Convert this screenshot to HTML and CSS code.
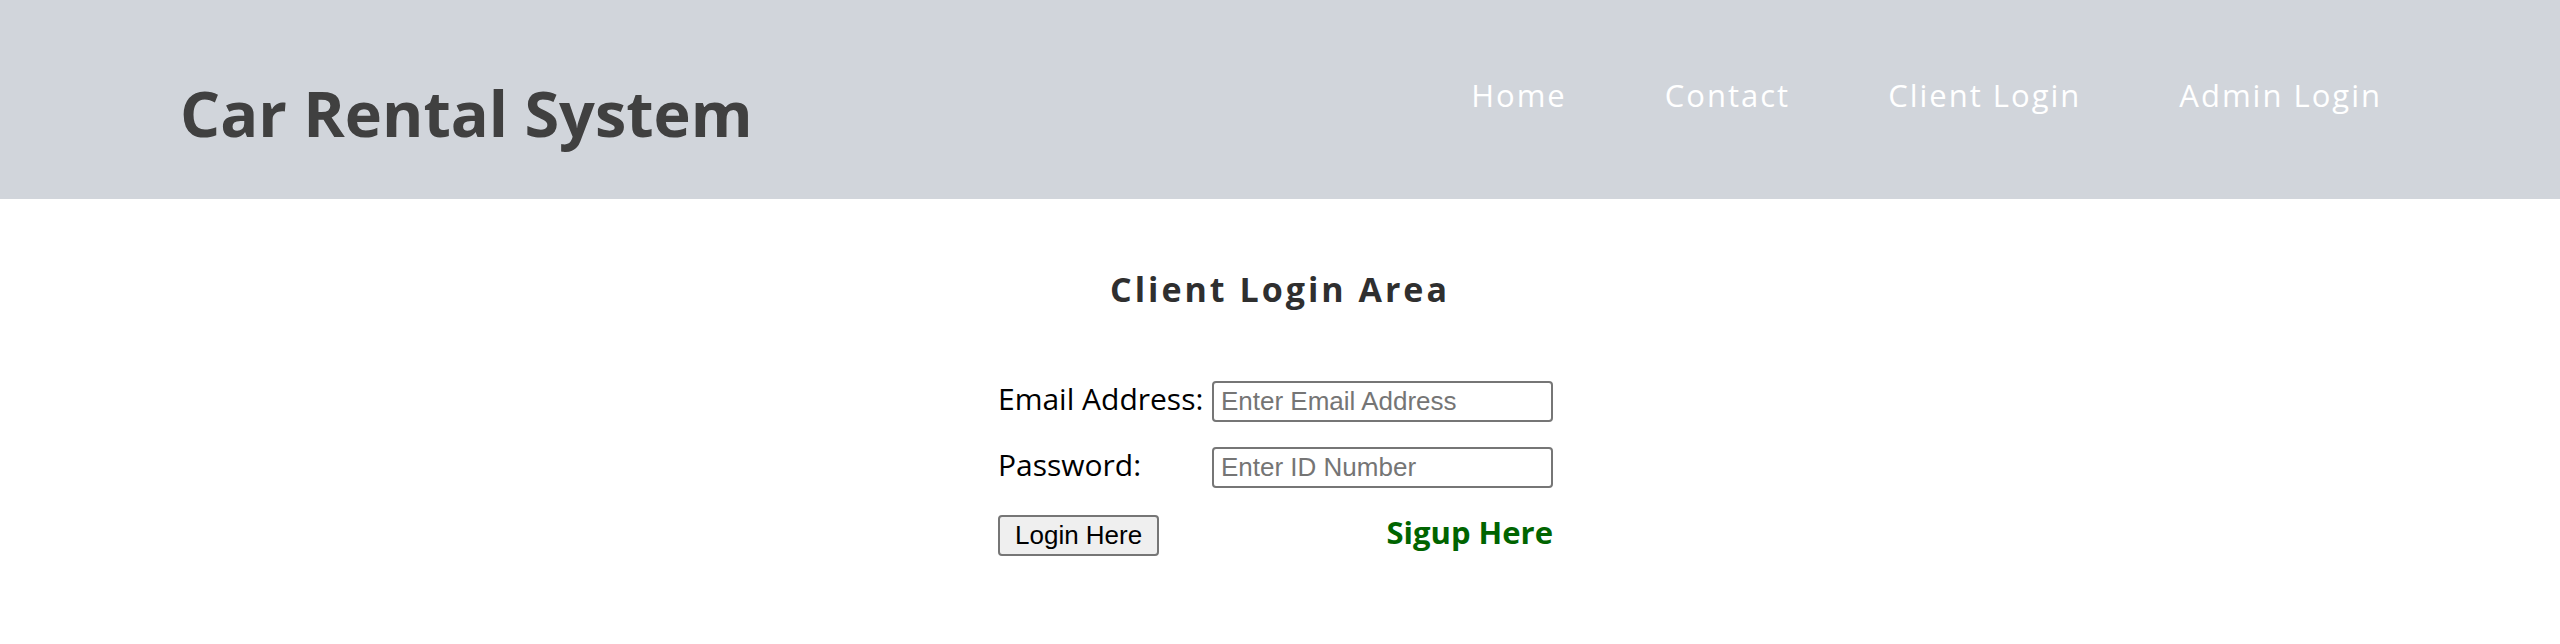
FILE: index.html
```html
<!DOCTYPE html>
<html lang="en">
<head>
<meta charset="utf-8">
<title>Car Rental System</title>
<link rel="stylesheet" href="styles.css">
</head>
<body>
<header class="topbar">
  <h1 class="brand">Car Rental System</h1>
  <nav class="menu">
    <a class="menu-link" href="#">Home</a>
    <a class="menu-link" href="#">Contact</a>
    <a class="menu-link" href="#">Client Login</a>
    <a class="menu-link" href="#">Admin Login</a>
  </nav>
</header>
<main class="content">
  <h2 class="area-title">Client Login Area</h2>
  <form class="login-form">
    <label class="field-label" for="email">Email Address:</label>
    <input class="field-input" id="email" type="text" placeholder="Enter Email Address">
    <label class="field-label" for="pass">Password:</label>
    <input class="field-input" id="pass" type="password" placeholder="Enter ID Number">
    <button class="login-btn" type="button">Login Here</button>
    <a class="signup-link" href="#">Sigup Here</a>
  </form>
</main>
</body>
</html>
```
FILE: styles.css
```css
html, body {
  margin: 0;
  padding: 0;
  background: #ffffff;
}

body {
  font-family: "Open Sans", "Noto Sans", sans-serif;
}

.topbar {
  height: 199px;
  box-sizing: border-box;
  background: #d1d5db;
  display: flex;
  justify-content: space-between;
  align-items: flex-start;
  padding: 0 178px 0 180px;
}

.brand {
  margin: 81px 0 0 0;
  font-size: 63px;
  line-height: 63px;
  font-weight: 700;
  color: #404040;
}

.menu {
  display: flex;
  gap: 98px;
  margin-top: 80px;
}

.menu-link {
  display: block;
  font-size: 31px;
  line-height: 31px;
  letter-spacing: 2px;
  color: #ffffff;
  text-decoration: none;
}

.content {
  padding-top: 70px;
}

.area-title {
  margin: 0;
  text-align: center;
  font-size: 34px;
  line-height: 40px;
  font-weight: 700;
  letter-spacing: 3px;
  color: #2f2f2f;
}

.login-form {
  display: grid;
  grid-template-columns: 214px 341px;
  row-gap: 25px;
  align-items: baseline;
  width: 555px;
  margin: 72px 0 0 calc(50% - 282px);
}

.field-label {
  font-size: 30px;
  line-height: 30px;
  color: #000000;
}

.field-input {
  box-sizing: border-box;
  width: 341px;
  height: 41px;
  border: 2px solid #767676;
  border-radius: 4px;
  padding: 0 7px;
  font-family: "Liberation Sans", Arial, sans-serif;
  font-size: 26px;
  color: #000000;
  background: #ffffff;
}

.field-input::placeholder {
  color: #757575;
}

.login-btn {
  justify-self: start;
  margin-top: 2px;
  box-sizing: border-box;
  height: 41px;
  padding: 0 15px;
  border: 2px solid #767676;
  border-radius: 4px;
  background: #efefef;
  font-family: "Liberation Sans", Arial, sans-serif;
  font-size: 26px;
  color: #000000;
}

.signup-link {
  justify-self: end;
  font-size: 31px;
  line-height: 31px;
  font-weight: 700;
  color: #006400;
  text-decoration: none;
}
```
